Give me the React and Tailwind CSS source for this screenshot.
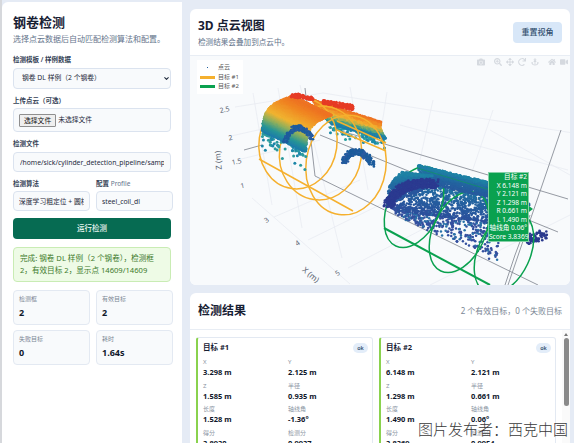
import { useMemo } from "react";
import { ChevronDown } from "lucide-react";
import { FaCamera, FaSearchPlus, FaArrowsAlt, FaRedo, FaAnchor, FaHome, FaVideo } from "react-icons/fa";

const stats = [
  ["检测框", "2"],
  ["有效目标", "2"],
  ["失败目标", "0"],
  ["耗时", "1.64s"],
];

const targets = [
  {
    name: "目标 #1",
    rows: [["X", "3.298 m"], ["Y", "2.125 m"], ["Z", "1.585 m"], ["半径", "0.935 m"], ["长度", "1.528 m"], ["轴线角", "-1.36°"], ["得分", "3.8930"], ["检测分", "0.9937"]],
  },
  {
    name: "目标 #2",
    rows: [["X", "6.148 m"], ["Y", "2.121 m"], ["Z", "1.298 m"], ["半径", "0.661 m"], ["长度", "1.490 m"], ["轴线角", "0.06°"], ["得分", "3.8369"], ["检测分", "0.9954"]],
  },
];

const tipLines = ["目标 #2", "X 6.148 m", "Y 2.121 m", "Z 1.298 m", "R 0.661 m", "L 1.490 m", "轴线角 0.06°", "Score 3.8369"];

const labelCls = "text-[6.5px] font-semibold leading-[10px] text-[#334155]";
const fieldCls = "h-[20px] w-full rounded-[4px] border border-[#dbe3ef] bg-[#f8fafc] text-[6.8px] text-[#1e293b] outline-none";

// 简单的伪随机，保证每次画出来一样
const makeRandom = (seed) => {
  let s = seed;
  return () => {
    s = (s * 16807) % 2147483647;
    return s / 2147483647;
  };
};

const mix = (a, b, k) => a.map((v, i) => Math.round(v + (b[i] - v) * k));

const rampColor = (stops, v) => {
  const h = Math.max(0, Math.min(1, v));
  for (let i = 1; i < stops.length; i++) {
    if (h <= stops[i][0]) {
      const [p0, c0] = stops[i - 1];
      const [p1, c1] = stops[i];
      return `rgb(${mix(c0, c1, (h - p0) / (p1 - p0)).join(",")})`;
    }
  }
  return `rgb(${stops[stops.length - 1][1].join(",")})`;
};

const heatStops = [
  [0, [30, 125, 170]],
  [0.12, [40, 150, 150]],
  [0.28, [140, 175, 95]],
  [0.45, [240, 180, 50]],
  [0.8, [240, 135, 35]],
  [1, [238, 115, 35]],
];

const coolStops = [
  [0, [45, 75, 155]],
  [0.6, [35, 100, 160]],
  [1, [30, 130, 165]],
];

// 四个角围成的曲面片，bulge 让中间鼓出来
const patch = (rand, count, p00, p10, p01, p11, bulge) => {
  const pts = [];
  for (let i = 0; i < count; i++) {
    const u = rand();
    const v = rand();
    const bx = p00[0] + (p10[0] - p00[0]) * u;
    const by = p00[1] + (p10[1] - p00[1]) * u;
    const tx = p01[0] + (p11[0] - p01[0]) * u;
    const ty = p01[1] + (p11[1] - p01[1]) * u;
    const b = Math.sin(Math.PI * v) * bulge;
    pts.push({ x: bx + (tx - bx) * v - b, y: by + (ty - by) * v - b * 0.7, u, v });
  }
  return pts;
};

const bezierBand = (rand, count, a, c, b, spread) => {
  const pts = [];
  for (let i = 0; i < count; i++) {
    const k = rand();
    const m = 1 - k;
    pts.push({
      x: a[0] * m * m + 2 * c[0] * k * m + b[0] * k * k + (rand() - 0.5) * spread,
      y: a[1] * m * m + 2 * c[1] * k * m + b[1] * k * k + (rand() - 0.5) * spread,
    });
  }
  return pts;
};

const byV = (a, b) => a.v - b.v;

const buildOrange = () => {
  const rand = makeRandom(4711);
  const back = [];
  patch(rand, 90, [334, 125], [385, 140], [330, 122], [384, 137], 0).forEach((p) => {
    back.push({ x: p.x, y: p.y + rand() * rand() * 13, c: rand() > 0.5 ? "#1c8aa8" : "#2a9ea0" });
  });
  patch(rand, 2600, [331, 124], [386, 139], [313, 100], [381, 122], 3).forEach((p) => {
    back.push({ x: p.x, y: p.y, c: rampColor(heatStops, p.v * 1.1 - 0.05) });
  });
  patch(rand, 110, [323, 104], [353, 110], [323, 100], [353, 105], 0).forEach((p) => {
    back.push({ x: p.x, y: p.y, c: "#e63b25" });
  });

  const front = [];
  patch(rand, 80, [262, 132], [306, 152], [262, 129], [306, 149], 0).forEach((p) => {
    front.push({ x: p.x, y: p.y + rand() * rand() * 22, c: rand() > 0.5 ? "#1c86a8" : "#2b9a9d" });
  });
  patch(rand, 4000, [262, 131], [306, 152], [293, 96], [332, 115], 8)
    .sort(byV)
    .forEach((p) => {
      front.push({ x: p.x, y: p.y, c: rampColor(heatStops, p.v * 1.05 - 0.02) });
    });
  patch(rand, 70, [291, 97], [313, 100], [293, 93], [313, 97], 0).forEach((p) => {
    front.push({ x: p.x, y: p.y, c: "#e63b25" });
  });
  return { back, front };
};

const buildGreen = () => {
  const rand = makeRandom(9001);
  const under = [];
  // 稀疏的下半部分
  patch(rand, 420, [396, 214], [497, 262], [390, 205], [500, 222], 0).forEach((p) => {
    under.push({ x: p.x, y: p.y + (rand() - 0.5) * 3, c: rand() > 0.25 ? "#34509f" : "#2a72a8", r: 1.25 });
  });
  // 中间密度
  patch(rand, 1000, [392, 210], [505, 226], [428, 184], [530, 204], 0).forEach((p) => {
    under.push({ x: p.x, y: p.y, c: rampColor(coolStops, p.v * 0.7 + 0.1), r: 1.25 });
  });
  const over = [];
  // 顶部密实的一条
  patch(rand, 1800, [428, 184], [530, 206], [418, 165], [528, 192], 3).forEach((p) => {
    over.push({ x: p.x, y: p.y, c: rampColor(coolStops, p.v * 0.7 + 0.35), r: 1.4 });
  });
  // 前沿深色带
  patch(rand, 700, [388, 206], [430, 186], [402, 172], [433, 176], 5).forEach((p) => {
    over.push({ x: p.x, y: p.y, c: rampColor(coolStops, p.v * 0.9 + 0.25), r: 1.4 });
  });
  bezierBand(rand, 420, [388, 206], [398, 180], [435, 184], 9).forEach((p) => {
    over.push({ x: p.x, y: p.y, c: "#2b3a90", r: 1.4 });
  });
  return { under, over };
};

const CloudChart = () => {
  const { back, front } = useMemo(buildOrange, []);
  const { under, over } = useMemo(buildGreen, []);
  const arcs = useMemo(() => {
    const rand = makeRandom(77);
    return [
      ...bezierBand(rand, 170, [285, 143], [295, 115], [312, 138], 4.5),
      ...bezierBand(rand, 200, [343, 163], [356, 140], [373, 164], 5.5),
    ];
  }, []);
  const tail = useMemo(() => {
    const rand = makeRandom(55);
    return bezierBand(rand, 70, [526, 240], [535, 238], [544, 234], 9);
  }, []);

  const orangeRings = [
    [298, 143, 39, 46],
    [320.5, 153, 41, 47],
    [346, 165, 40, 50],
  ];
  const greenRings = [
    [414, 207],
    [459, 232],
    [504, 253],
  ];

  return (
    <svg viewBox="190 56 380 229" className="block h-[229px] w-[380px]">
      {/* 网格 */}
      <g stroke="#e6e9f0" strokeWidth="0.7" fill="none">
        <path d="M253 93 L272 205 M278 88 L302 228 M300 85 L342 258 M350 87 L368 190 M387 92 L378 150 M433 100 L420 160 M493 110 L472 172" />
        <path d="M235 107 L323 93 L573 133 M231 136 L312 118 M237 160 L320 140 M274 217 L360 180 M308 240 L400 195 M348 268 L450 215" />
        <path d="M252 198 L350 284 M400 125 L568 170 M430 285 L570 215 M490 130 L570 175" />
      </g>
      {/* 坐标轴 */}
      <g stroke="#8a8f98" strokeWidth="0.9" fill="none">
        <path d="M305 88 L315 176 L538 285" />
        <path d="M244 150 L262 145 M320 135 L558 232 M328 127 L568 199" />
        <path d="M561 130 L508 285 M530 215 L515 255 L505 285" />
      </g>

      {/* 目标 1 */}
      {back.map((p, i) => (
        <circle key={i} cx={p.x} cy={p.y} r="1.5" fill={p.c} />
      ))}
      <g stroke="#f5b02e" strokeWidth="1.5" fill="none">
        {orangeRings.map(([cx, cy, rx, ry], i) => (
          <ellipse key={i} cx={cx} cy={cy} rx={rx} ry={ry} transform={`rotate(8 ${cx} ${cy})`} />
        ))}
        <path d="M259 159 L353 211 M337 130 L386 151 M337 121 L386 143" />
      </g>
      {front.map((p, i) => (
        <circle key={i} cx={p.x} cy={p.y} r="1.5" fill={p.c} />
      ))}
      {arcs.map((p, i) => (
        <circle key={i} cx={p.x} cy={p.y} r="1.3" fill={i % 3 === 0 ? "#2a5aa0" : "#1c5c9c"} />
      ))}

      {/* 目标 2 */}
      {under.map((p, i) => (
        <circle key={i} cx={p.x} cy={p.y} r={p.r} fill={p.c} />
      ))}
      {tail.map((p, i) => (
        <circle key={i} cx={p.x} cy={p.y} r="1.3" fill="#2a3a8e" />
      ))}
      <g stroke="#0aa14f" fill="none">
        {greenRings.map(([cx, cy], i) => (
          <ellipse key={i} cx={cx} cy={cy} rx={26} ry={43} strokeWidth="1.5" transform={`rotate(25 ${cx} ${cy})`} />
        ))}
        <path d="M384 228 L490 285" strokeWidth="2" />
      </g>
      {over.map((p, i) => (
        <circle key={i} cx={p.x} cy={p.y} r={p.r} fill={p.c} />
      ))}
      <path d="M417 168 L490 190" stroke="#0aa14f" strokeWidth="1" opacity="0.55" fill="none" />
      <path d="M529 206 L533 209 L529 212 Z" fill="#0aa14f" />

      {/* 轴标签 */}
      <g className="fill-[#5b6472] text-[7px]" textAnchor="middle">
        <text transform="translate(225 112) rotate(-12)">2.5</text>
        <text transform="translate(231 140) rotate(-12)">2</text>
        <text transform="translate(237 164) rotate(-12)">1.5</text>
        <text transform="translate(243 188) rotate(-12)">1</text>
        <text transform="translate(268 222) rotate(-35)">3</text>
        <text transform="translate(299 245) rotate(-35)">4</text>
        <text transform="translate(339 275) rotate(-35)">5</text>
        <text transform="translate(221 160) rotate(-95)" className="text-[8px]">Z (m)</text>
        <text transform="translate(309 277) rotate(40)" className="text-[8px]">X (m)</text>
      </g>
    </svg>
  );
};

export default function App() {
  return (
    <div className="relative box-border flex h-[443px] w-[574px] overflow-hidden border-l-2 border-[#d6d8dc] bg-[#e5ebf5] font-['Noto_Sans','Noto_Sans_CJK_SC',sans-serif] text-[#172033]">
      {/* 左侧面板 */}
      <aside className="mt-[2px] flex w-[180px] shrink-0 flex-col rounded-tl-md bg-white px-[11px] pt-[11px]">
        <h1 className="text-[13px] font-bold leading-[18px]">钢卷检测</h1>
        <p className="mt-[2px] whitespace-nowrap text-[8px] leading-[12px] text-[#64748b]">选择点云数据后自动匹配检测算法和配置。</p>

        <label className={`mt-[10px] ${labelCls}`}>检测模板 / 样例数据</label>
        <div className="relative mt-[3px]">
          <select className="block h-[21px] w-full appearance-none rounded-[4px] border border-[#dbe3ef] bg-[#f8fafc] pl-[8px] text-[6.8px] text-[#1e293b]">
            <option>钢卷 DL 样例（2 个钢卷）</option>
          </select>
          <ChevronDown size={7} strokeWidth={3.5} className="pointer-events-none absolute right-[1px] top-[7px] text-[#1e293b]" />
        </div>

        <label className={`mt-[7px] ${labelCls}`}>上传点云（可选）</label>
        <div className="mt-[2px] flex h-[24px] items-center gap-[2px] rounded-[4px] border border-[#dbe3ef] bg-[#f8fafc] px-[5px]">
          <button className="h-[13px] rounded-[1px] border border-[#8f8f8f] bg-[#efefef] px-[4px] text-[6.8px] leading-[11px] text-[#111]">选择文件</button>
          <span className="text-[6.8px] text-[#1e293b]">未选择文件</span>
        </div>

        <label className={`mt-[7px] ${labelCls}`}>检测文件</label>
        <input
          readOnly
          value="/home/sick/cylinder_detection_pipeline/sample_data/steel_coil.pcd"
          className={`mt-[3px] px-[6px] ${fieldCls}`}
        />

        <div className="mt-[7px] grid grid-cols-[77px_77px] gap-x-[6px]">
          <label className={labelCls}>检测算法</label>
          <label className={labelCls}>
            配置 <span className="font-normal text-[#64748b]">Profile</span>
          </label>
          <input readOnly value="深度学习粗定位 + 圆柱精拟合" className={`mt-[2px] px-[5px] ${fieldCls}`} />
          <input readOnly value="steel_coil_dl" className={`mt-[2px] px-[5px] ${fieldCls}`} />
        </div>

        <button className="mt-[7px] h-[21px] w-full rounded-[4px] bg-[#066b52] text-[7.5px] font-medium text-[#e8f5ef]">运行检测</button>

        <div className="mt-[8px] h-[35px] rounded-[4px] border border-[#c9ecb4] bg-[#eefbe6] px-[6px] py-[5px] text-[7.6px] leading-[11.5px] text-[#3d7a2c]">
          完成: 钢卷 DL 样例（2 个钢卷），检测框 2，有效目标 2，显示点 14609/14609
        </div>

        <div className="mt-[8px] grid grid-cols-[77px_77px] gap-x-[6px] gap-y-[5px]">
          {stats.map(([label, value]) => (
            <div key={label} className="h-[35px] rounded-[4px] border border-[#e3e9f2] bg-[#f8fafc] px-[5px] pt-[4px]">
              <div className="text-[6px] leading-[9px] text-[#7b8794]">{label}</div>
              <div className="mt-[2px] text-[9px] font-bold leading-[13px] text-[#0f172a]">{value}</div>
            </div>
          ))}
        </div>
      </aside>

      {/* 右侧 */}
      <main className="ml-[8px] flex w-[380px] shrink-0 flex-col gap-[8px] pt-[9px]">
        <section className="h-[276px] overflow-hidden rounded-md bg-white">
          <header className="flex h-[47px] items-center justify-between border-b border-[#e8edf4] px-[8px]">
            <div>
              <h2 className="text-[12px] font-bold leading-[16px]">3D 点云视图</h2>
              <p className="mt-[3px] text-[7.6px] leading-[10px] text-[#64748b]">检测结果会叠加到点云中。</p>
            </div>
            <button className="h-[21px] w-[49px] rounded-[4px] bg-[#d8e7f8] text-[8px] font-medium text-[#33506f]">重置视角</button>
          </header>
          <div className="relative h-[229px] bg-[#f8fafc]">
            <CloudChart />
            {/* 图例 */}
            <div className="absolute left-[7px] top-[4px] flex h-[34px] w-[46px] flex-col justify-center gap-[0.5px] bg-white pl-[3px] text-[6px] leading-[9px] text-[#555]">
              <div className="flex items-center gap-[3px]">
                <span className="flex w-[15px] justify-center"><span className="h-[1px] w-[1px] bg-[#1f5f9f]" /></span>点云
              </div>
              <div className="flex items-center gap-[3px]">
                <span className="h-[3px] w-[15px] bg-[#f5b02e]" />目标 #1
              </div>
              <div className="flex items-center gap-[3px]">
                <span className="h-[3px] w-[15px] bg-[#0aa14f]" />目标 #2
              </div>
            </div>
            {/* 工具栏 */}
            <div className="absolute right-[2px] top-[2px] flex items-center text-[8px] text-[#d5d9df]">
              <FaCamera className="mr-[9px]" />
              <FaSearchPlus className="mr-[4px]" />
              <FaArrowsAlt className="mr-[4px]" />
              <FaRedo className="mr-[5px]" />
              <FaAnchor className="mr-[9px]" />
              <FaHome className="mr-[4px]" />
              <FaVideo />
            </div>
            {/* 悬浮提示 */}
            <div className="absolute left-[298px] top-[116px] w-[41px] whitespace-nowrap border border-white/50 bg-[#0aa14f] pr-[1px] text-right text-[6.6px] leading-[8.5px] text-white">
              {tipLines.map((line) => (
                <div key={line}>{line}</div>
              ))}
            </div>
          </div>
        </section>

        <section className="flex min-h-0 flex-1 flex-col overflow-hidden rounded-t-md bg-white">
          <header className="flex h-[37px] shrink-0 items-center justify-between border-b border-[#e8edf4] px-[8px]">
            <h2 className="text-[12px] font-bold">检测结果</h2>
            <span className="text-[8px] text-[#7b8794]">2 个有效目标，0 个失败目标</span>
          </header>
          <div className="flex min-h-0 flex-1">
            <div className="flex flex-1 gap-[6px] overflow-hidden pl-[6px] pt-[7px]">
              {targets.map((t) => (
                <div key={t.name} className="h-[130px] w-[177px] shrink-0 rounded-[3px] border border-l-2 border-[#e3e9f2] border-l-[#8ad24e] bg-white pl-[5px] pr-[4px] pt-[4px]">
                  <div className="flex h-[12px] items-center justify-between">
                    <span className="text-[7.5px] font-bold">{t.name}</span>
                    <span className="flex h-[10px] w-[15px] items-center justify-center rounded-full bg-[#e3edf9] text-[5.5px] font-semibold text-[#33506f]">ok</span>
                  </div>
                  <div className="mt-[4px] grid grid-cols-[85px_85px]">
                    {t.rows.map(([label, value]) => (
                      <div key={label} className="h-[23.5px]">
                        <div className="text-[6px] leading-[9px] text-[#8b95a3]">{label}</div>
                        <div className="text-[7.5px] font-bold leading-[11px] text-[#0f172a]">{value}</div>
                      </div>
                    ))}
                  </div>
                </div>
              ))}
            </div>
            {/* 滚动条 */}
            <div className="flex w-[8px] flex-col items-center bg-[#fafafa]">
              <span className="mt-[3px] h-0 w-0 border-x-[2px] border-b-[3px] border-x-transparent border-b-[#777]" />
              <span className="mt-[2px] h-[68px] w-[5px] rounded-full bg-[#8a8a8a]" />
            </div>
          </div>
        </section>
      </main>

      {/* 水印 */}
      <div className="absolute left-[416px] top-[418px] whitespace-nowrap text-[15px] font-light leading-[22px] text-[#3a3a3a] [text-shadow:0_0_2px_#fff]">
        图片发布者：西克中国
      </div>
    </div>
  );
}
